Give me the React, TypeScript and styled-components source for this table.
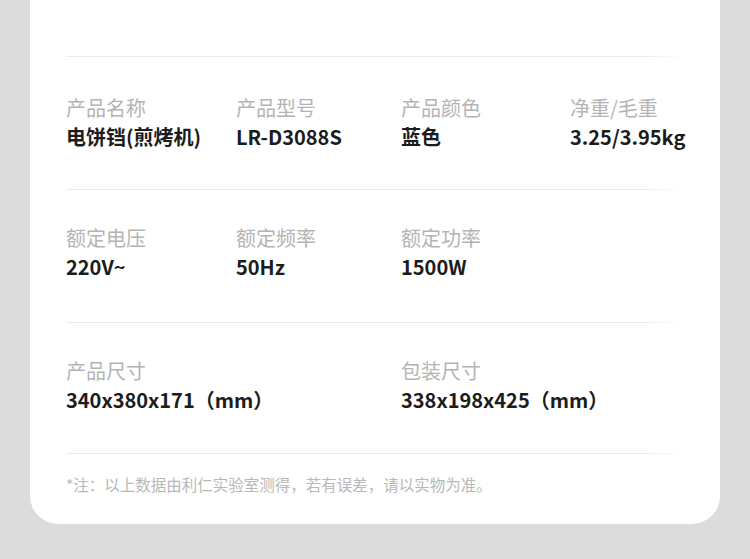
import React from "react";
import styled, { createGlobalStyle } from "styled-components";

const Global = createGlobalStyle`
  html, body { margin: 0; padding: 0; background: #dcdcdc; }
  body { font-family: "Noto Sans CJK SC", "Noto Sans", sans-serif; }
`;

const Page = styled.div`
  width: 750px;
  height: 559px;
  background: #dcdcdc;
  padding: 0 30px;
  box-sizing: border-box;
  overflow: hidden;
`;

const Card = styled.div`
  background: #ffffff;
  border-radius: 0 0 28px 28px;
  padding: 56px 36px 0 36px;
  height: 524px;
  box-sizing: border-box;
`;

const Divider = styled.div`
  height: 1px;
  background: linear-gradient(to right, #ececec 0%, #ececec 94%, rgba(236,236,236,0) 100%);
`;

const Row = styled.div<{ $top: number; $bottom: number }>`
  display: grid;
  grid-template-columns: 170px 165px 169px 1fr;
  padding: ${(p) => p.$top}px 0 ${(p) => p.$bottom}px;
`;

const Cell = styled.div<{ $col: number }>`
  grid-column: ${(p) => p.$col};
  display: flex;
  flex-direction: column;
  white-space: nowrap;
`;

const Label = styled.div`
  font-size: 20px;
  line-height: 28px;
  color: #b4b4b4;
  font-weight: 400;
`;

const Value = styled.div`
  font-size: 20px;
  line-height: 30px;
  color: #1c1c1c;
  font-weight: 700;
`;

const Note = styled.div`
  padding-top: 19px;
  font-size: 15.5px;
  line-height: 22px;
  color: #b8b8b8;
  white-space: nowrap;
`;

type Item = { col: number; label: string; value: string };

const rows: { top: number; bottom: number; items: Item[] }[] = [
  {
    top: 37,
    bottom: 37,
    items: [
      { col: 1, label: "产品名称", value: "电饼铛(煎烤机)" },
      { col: 2, label: "产品型号", value: "LR-D3088S" },
      { col: 3, label: "产品颜色", value: "蓝色" },
      { col: 4, label: "净重/毛重", value: "3.25/3.95kg" },
    ],
  },
  {
    top: 34,
    bottom: 40,
    items: [
      { col: 1, label: "额定电压", value: "220V~" },
      { col: 2, label: "额定频率", value: "50Hz" },
      { col: 3, label: "额定功率", value: "1500W" },
    ],
  },
  {
    top: 34,
    bottom: 38,
    items: [
      { col: 1, label: "产品尺寸", value: "340x380x171（mm）" },
      { col: 3, label: "包装尺寸", value: "338x198x425（mm）" },
    ],
  },
];

export default function App() {
  return (
    <>
      <Global />
      <Page>
        <Card>
          {rows.map((r, i) => (
            <React.Fragment key={i}>
              <Divider />
              <Row $top={r.top} $bottom={r.bottom}>
                {r.items.map((it) => (
                  <Cell key={it.label} $col={it.col}>
                    <Label>{it.label}</Label>
                    <Value>{it.value}</Value>
                  </Cell>
                ))}
              </Row>
            </React.Fragment>
          ))}
          <Divider />
          <Note>*注：以上数据由利仁实验室测得，若有误差，请以实物为准。</Note>
        </Card>
      </Page>
    </>
  );
}
